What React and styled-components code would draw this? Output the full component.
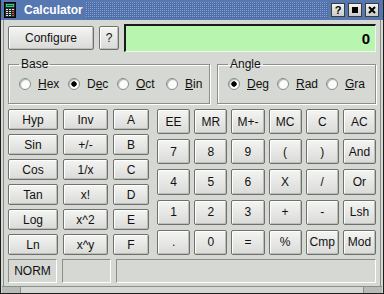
import React from 'react'
import styled, { createGlobalStyle } from 'styled-components'

const GlobalStyle = createGlobalStyle`
  html, body {
    margin: 0;
    padding: 0;
    background: #d6d8d3;
  }
  body {
    font-family: "Liberation Sans", Arial, sans-serif;
    font-size: 12px;
    color: #111;
  }
`

const Window = styled.div`
  width: 384px;
  height: 294px;
  box-sizing: border-box;
  display: flex;
  flex-direction: column;
  background: #d6d8d3;
  border: 1px solid #1e1e1e;
  border-top: none;
`

const TitleBar = styled.div`
  height: 20px;
  flex: none;
  display: flex;
  align-items: center;
  background: #5677b0;
  padding: 0 4px 0 3px;
`

const TitleText = styled.div`
  margin-left: 8px;
  color: #fff;
  font-weight: bold;
  font-size: 12px;
  white-space: nowrap;
`

const TitleDots = styled.svg`
  flex: 1;
  height: 16px;
  margin: 0 3px 0 3px;
`

const TitleButtons = styled.div`
  display: flex;
  gap: 3px;
`

const TitleButton = styled.div`
  width: 14px;
  height: 14px;
  box-sizing: border-box;
  border: 1px solid #3a3c38;
  background: linear-gradient(#f4f4f2, #c9cbc6);
  display: flex;
  align-items: center;
  justify-content: center;
  font-weight: bold;
  font-size: 11px;
  line-height: 1;
  color: #000;
`

const Body = styled.div`
  flex: 1;
  margin: 0 2px;
  border-left: 1px solid #8c8e8a;
  border-right: 1px solid #8c8e8a;
  padding: 4px 4px 0;
  display: flex;
  flex-direction: column;
`

const TopRow = styled.div`
  height: 28px;
  display: flex;
  align-items: center;
  gap: 5px;
`

const Key = styled.button`
  box-sizing: border-box;
  margin: 0;
  padding: 0;
  width: 100%;
  height: 100%;
  font: 12px "Liberation Sans", Arial, sans-serif;
  color: #111;
  border: 1px solid #6f716d;
  border-radius: 2px;
  background: linear-gradient(#f4f4f2, #dadbd8);
  box-shadow: inset 1px 1px 0 #fff, inset -1px -1px 0 #bcbeb9;
  display: flex;
  align-items: center;
  justify-content: center;
  white-space: nowrap;
`

const ToolButton = styled(Key)`
  flex: none;
  width: ${p => p.$w}px;
  height: 24px;
`

const Display = styled.div`
  flex: 1;
  height: 28px;
  box-sizing: border-box;
  background: #b8f6b0;
  border-top: 2px solid #1a1a1a;
  border-left: 2px solid #1a1a1a;
  border-bottom: 1px solid #f4f4f4;
  border-right: 1px solid #f4f4f4;
  display: flex;
  align-items: center;
  justify-content: flex-end;
  padding-right: 5px;
  font-weight: bold;
  font-size: 15px;
  color: #000;
`

const Groups = styled.div`
  margin-top: 5px;
  display: flex;
  gap: 7px;
`

const Group = styled.fieldset`
  margin: 0;
  padding: 5px 0 0 10px;
  min-width: 0;
  height: 47px;
  box-sizing: border-box;
  border: 1px solid #8c8e8a;
  box-shadow: inset 1px 1px 0 #fff, 1px 1px 0 #fff;
  flex: ${p => (p.$w ? `0 0 ${p.$w}px` : '1')};
`

const Legend = styled.legend`
  padding: 0 2px;
  font-size: 12px;
  line-height: 14px;
`

const RadioRow = styled.div`
  display: grid;
  grid-template-columns: repeat(4, 49px);
  height: 15px;
  align-items: center;
`

const RadioItem = styled.label`
  display: flex;
  align-items: center;
  gap: 7px;
  white-space: nowrap;
`

const RadioMark = styled.span`
  width: 12px;
  height: 12px;
  box-sizing: border-box;
  border-radius: 50%;
  border: 1px solid #8a8c88;
  background: ${p =>
    p.$on ? 'radial-gradient(circle, #000 0 2.4px, #fcfcfc 3px)' : '#fcfcfc'};
  box-shadow: inset 1px 1px 1px #b0b2ae;
`

const Keypad = styled.div`
  margin-top: 5px;
  height: 146px;
  display: flex;
  gap: 8px;
`

const FnGrid = styled.div`
  display: grid;
  grid-template-columns: 50px 45px 36px;
  grid-template-rows: repeat(6, 1fr);
  column-gap: 5px;
  row-gap: 4px;
`

const NumGrid = styled.div`
  flex: 1;
  display: grid;
  grid-template-columns: repeat(6, 1fr);
  grid-template-rows: repeat(5, 1fr);
  column-gap: 4px;
  row-gap: 5px;
`

const StatusBar = styled.div`
  margin-top: 4px;
  height: 24px;
  display: flex;
  gap: 5px;
`

const StatusCell = styled.div`
  box-sizing: border-box;
  flex: ${p => (p.$w ? `0 0 ${p.$w}px` : '1')};
  border-top: 1px solid #8c8e8a;
  border-left: 1px solid #8c8e8a;
  border-bottom: 1px solid #fff;
  border-right: 1px solid #fff;
  display: flex;
  align-items: center;
  justify-content: center;
`

const BottomFrame = styled.div`
  height: 6px;
  flex: none;
  margin: 0 1px;
  border-top: 1px solid #8c8e8a;
  display: flex;
`

const Grip = styled.div`
  width: 18px;
  background: #b9bbb6;
  border-${p => (p.$right ? 'left' : 'right')}: 1px solid #8c8e8a;
`

const Spacer = styled.div`
  flex: 1;
`

const fnKeys = [
  'Hyp', 'Inv', 'A',
  'Sin', '+/-', 'B',
  'Cos', '1/x', 'C',
  'Tan', 'x!', 'D',
  'Log', 'x^2', 'E',
  'Ln', 'x^y', 'F',
]

const numKeys = [
  'EE', 'MR', 'M+-', 'MC', 'C', 'AC',
  '7', '8', '9', '(', ')', 'And',
  '4', '5', '6', 'X', '/', 'Or',
  '1', '2', '3', '+', '-', 'Lsh',
  '.', '0', '=', '%', 'Cmp', 'Mod',
]

const bases = [
  { pre: '', u: 'H', post: 'ex' },
  { pre: 'D', u: 'e', post: 'c', on: true },
  { pre: '', u: 'O', post: 'ct' },
  { pre: '', u: 'B', post: 'in' },
]

const angles = [
  { pre: '', u: 'D', post: 'eg', on: true },
  { pre: '', u: 'R', post: 'ad' },
  { pre: '', u: 'G', post: 'ra' },
]

const AppIcon = () => (
  <svg width="12" height="16" viewBox="0 0 12 16">
    <rect x="0.5" y="0.5" width="11" height="15" fill="#1e2a28" stroke="#000" />
    <rect x="2" y="2" width="8" height="3" fill="#38c88a" />
    <rect x="3" y="3" width="6" height="1" fill="#0e5a3a" />
    {[7, 9, 11, 13].map(y =>
      [2, 5, 8].map(x => (
        <rect key={`${x}-${y}`} x={x} y={y} width="2" height="1" fill={x === 8 && y > 8 ? '#e04848' : '#e6e6e6'} />
      ))
    )}
  </svg>
)

const Radio = ({ item }) => (
  <RadioItem>
    <RadioMark $on={item.on} />
    <span>
      {item.pre}
      <u>{item.u}</u>
      {item.post}
    </span>
  </RadioItem>
)

const App = () => {
  return (
    <>
      <GlobalStyle />
      <Window>
        <TitleBar>
          <AppIcon />
          <TitleText>Calculator</TitleText>
          <TitleDots>
            <defs>
              <pattern id="dots" width="2" height="2" patternUnits="userSpaceOnUse">
                <rect width="2" height="2" fill="#4f6fa8" />
                <rect width="1" height="1" fill="#86a2d2" />
              </pattern>
            </defs>
            <rect width="100%" height="100%" fill="url(#dots)" />
          </TitleDots>
          <TitleButtons>
            <TitleButton>?</TitleButton>
            <TitleButton>
              <svg width="6" height="6"><rect width="6" height="6" fill="#000" /></svg>
            </TitleButton>
            <TitleButton>
              <svg width="8" height="8" viewBox="0 0 8 8">
                <path d="M1 1L7 7M7 1L1 7" stroke="#000" strokeWidth="2" />
              </svg>
            </TitleButton>
          </TitleButtons>
        </TitleBar>
        <Body>
          <TopRow>
            <ToolButton $w={86}>Configure</ToolButton>
            <ToolButton $w={20}>?</ToolButton>
            <Display>0</Display>
          </TopRow>
          <Groups>
            <Group $w={202}>
              <Legend>Base</Legend>
              <RadioRow>
                {bases.map(b => <Radio key={b.u} item={b} />)}
              </RadioRow>
            </Group>
            <Group>
              <Legend>Angle</Legend>
              <RadioRow>
                {angles.map(a => <Radio key={a.u} item={a} />)}
              </RadioRow>
            </Group>
          </Groups>
          <Keypad>
            <FnGrid>
              {fnKeys.map((k, i) => <Key key={i}>{k}</Key>)}
            </FnGrid>
            <NumGrid>
              {numKeys.map((k, i) => <Key key={i}>{k}</Key>)}
            </NumGrid>
          </Keypad>
          <StatusBar>
            <StatusCell $w={49}>NORM</StatusCell>
            <StatusCell $w={49} />
            <StatusCell />
          </StatusBar>
        </Body>
        <BottomFrame>
          <Grip />
          <Spacer />
          <Grip $right />
        </BottomFrame>
      </Window>
    </>
  )
}

export default App
